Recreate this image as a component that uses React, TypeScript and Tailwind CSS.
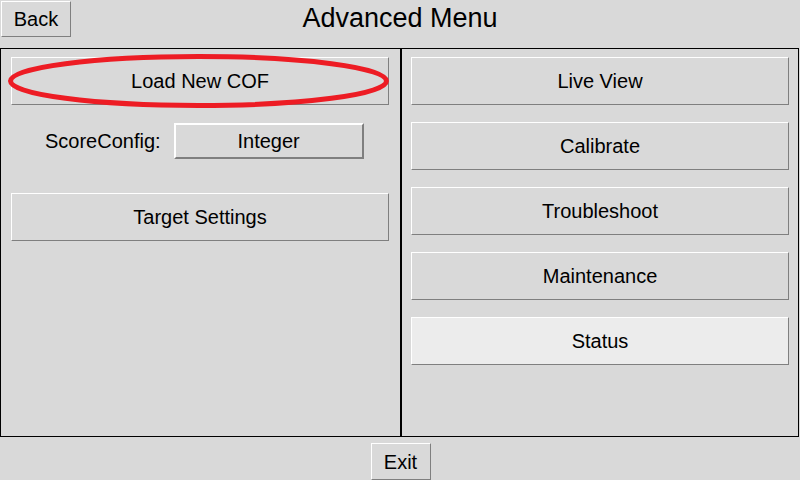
import React from "react";

const raised =
  "flex items-center justify-center border border-t-white border-l-white border-b-[#7f7f7f] border-r-[#7f7f7f] text-[20px] text-black leading-none";

function PanelButton({ label, light = false }: { label: string; light?: boolean }) {
  return (
    <button className={`${raised} w-[378px] h-[48px] ${light ? "bg-[#ececec]" : "bg-[#d9d9d9]"}`}>
      {label}
    </button>
  );
}

export default function App() {
  return (
    <div
      className="relative w-[800px] h-[480px] overflow-hidden bg-[#d9d9d9] text-black"
      style={{ fontFamily: '"Liberation Sans", Arial, sans-serif' }}
    >
      {/* Header */}
      <div className="relative h-[48px]">
        <button className={`${raised} absolute left-[1px] top-[1px] w-[70px] h-[36px] bg-[#d9d9d9]`}>
          Back
        </button>
        <div className="flex justify-center pt-[4px] text-[27px] leading-[28px]">Advanced Menu</div>
      </div>

      {/* Panels */}
      <div className="flex h-[389px]">
        <div className="relative w-[401px] h-full border border-black">
          <div className="flex flex-col pt-[8px] pl-[10px]">
            <PanelButton label="Load New COF" />
            <div className="flex items-center mt-[18px] pl-[34px] h-[36px]">
              <span className="text-[20px] leading-none">ScoreConfig:</span>
              <button className="ml-[13px] flex items-center justify-center w-[190px] h-[36px] bg-[#d9d9d9] border-2 border-t-white border-l-white border-b-[#7f7f7f] border-r-[#7f7f7f] text-[20px] leading-none">
                Integer
              </button>
            </div>
            <div className="mt-[34px]">
              <PanelButton label="Target Settings" />
            </div>
          </div>
          <svg
            className="absolute left-[-1px] top-[-49px] pointer-events-none"
            width="401"
            height="120"
            viewBox="0 0 401 120"
          >
            <ellipse cx="198.5" cy="81" rx="188" ry="24.5" fill="none" stroke="#ed1c24" strokeWidth="5" />
          </svg>
        </div>
        <div className="w-[398px] h-full border border-black">
          <div className="flex flex-col gap-[17px] pt-[8px] pl-[9px]">
            <PanelButton label="Live View" />
            <PanelButton label="Calibrate" />
            <PanelButton label="Troubleshoot" />
            <PanelButton label="Maintenance" />
            <PanelButton label="Status" light />
          </div>
        </div>
      </div>

      {/* Footer */}
      <div className="flex justify-center pt-[6px] pl-[1px]">
        <button className={`${raised} w-[60px] h-[37px] bg-[#d9d9d9]`}>Exit</button>
      </div>
    </div>
  );
}
